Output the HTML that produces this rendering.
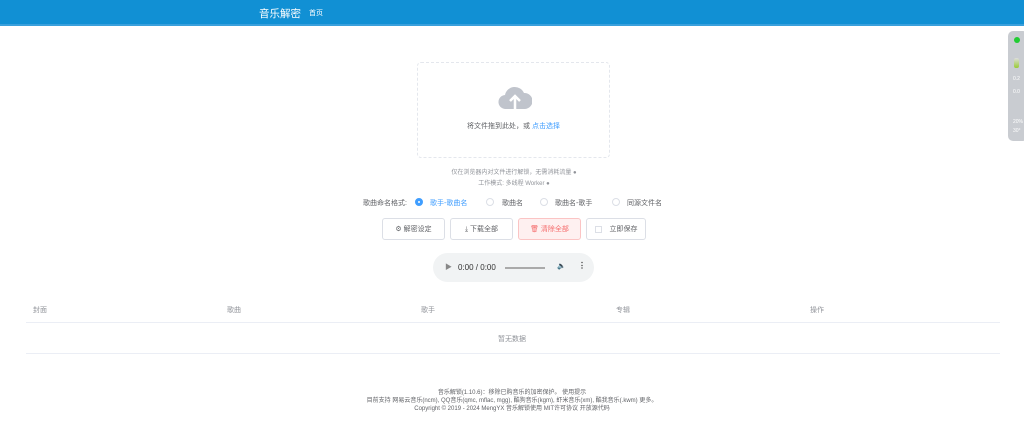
<!DOCTYPE html>
<html><head><meta charset="utf-8"><style>
*{margin:0;padding:0;box-sizing:border-box}
body{width:1024px;height:440px;background:#fff;font-family:"Liberation Sans","Noto Sans CJK SC",sans-serif;color:#606266;position:relative;overflow:hidden;font-size:7px}
.hdr{position:absolute;left:0;top:0;width:1024px;height:26px;background:#1190d4;border-bottom:2px solid #3aa0dc}
.hdr .t{position:absolute;left:259px;top:6px;color:#fff;font-size:10.5px}
.hdr .h{position:absolute;left:309px;top:8px;color:#fff;font-size:7px}
.up{position:absolute;left:417px;top:62px;width:193px;height:96px;border:1px dashed #e4e7ed;border-radius:4px}
.up .tx{position:absolute;top:58px;width:100%;text-align:center;font-size:7px;color:#606266}
.c{position:absolute;width:100%;text-align:center;color:#909399;font-size:6px}
.btn{position:absolute;top:218px;height:22px;border:1px solid #dcdfe6;border-radius:3px;font-size:7px;display:flex;align-items:center;justify-content:center;color:#606266}
.rad{position:absolute;top:198px;font-size:7px;color:#606266}
.dot{position:absolute;top:198px;width:8px;height:8px;border-radius:50%;border:1px solid #dcdfe6}
.th{position:absolute;top:305px;font-size:7px;color:#909399}
.line{position:absolute;left:26px;width:974px;height:1px;background:#ebeef5}
.f{position:absolute;width:100%;text-align:center;font-size:6px;color:#606266}
</style></head><body>
<div class="hdr"><span class="t">音乐解密</span><span class="h">首页</span></div>
<div class="up">
<svg style="position:absolute;left:80px;top:22px" width="34" height="26" viewBox="0 0 34 26"><path d="M8 24a7 7 0 0 1-1-14 10 10 0 0 1 19-2 8 8 0 0 1 1 16z" fill="#c0c4cc"/><path d="M17 24V12M12 16l5-5 5 5" stroke="#fff" stroke-width="2.5" fill="none"/></svg>
<div class="tx">将文件拖到此处，或 <span style="color:#409eff">点击选择</span></div></div>
<div class="c" style="top:167px;left:2px">仅在浏览器内对文件进行解锁，无需消耗流量 ●</div>
<div class="c" style="top:178px;left:2px">工作模式: 多线程 Worker ●</div>
<div class="rad" style="left:363px">歌曲命名格式:</div>
<div class="dot" style="left:415px;border:3px solid #409eff"></div><div class="rad" style="left:430px;color:#409eff">歌手-歌曲名</div>
<div class="dot" style="left:486px"></div><div class="rad" style="left:502px">歌曲名</div>
<div class="dot" style="left:540px"></div><div class="rad" style="left:555px">歌曲名-歌手</div>
<div class="dot" style="left:612px"></div><div class="rad" style="left:627px">同源文件名</div>
<div class="btn" style="left:382px;width:63px">⚙ 解密设定</div>
<div class="btn" style="left:450px;width:63px">⤓ 下载全部</div>
<div class="btn" style="left:518px;width:63px;background:#fef0f0;border-color:#fbc4c4;color:#f56c6c">🗑 清除全部</div>
<div class="btn" style="left:586px;width:60px"><span style="display:inline-block;width:7px;height:7px;border:1px solid #dcdfe6;margin-right:8px"></span>立即保存</div>
<div style="position:absolute;left:433px;top:253px;width:161px;height:29px;border-radius:15px;background:#f1f3f4;font-size:8px;color:#333">
<span style="position:absolute;left:12px;top:9px;font-size:7px;color:#888">▶</span><span style="position:absolute;left:25px;top:10px">0:00 / 0:00</span>
<span style="position:absolute;left:72px;top:14px;width:40px;height:2px;background:#aaa"></span>
<span style="position:absolute;left:124px;top:9px;font-size:7px">🔈</span><span style="position:absolute;left:145px;top:8px;font-weight:bold">⋮</span></div>
<div class="th" style="left:33px">封面</div><div class="th" style="left:227px">歌曲</div><div class="th" style="left:421px">歌手</div><div class="th" style="left:616px">专辑</div><div class="th" style="left:810px">操作</div>
<div class="line" style="top:322px"></div>
<div class="c" style="top:334px;font-size:7px">暂无数据</div>
<div class="line" style="top:353px"></div>
<div class="f" style="top:387px">音乐解锁(1.10.6)：移除已购音乐的加密保护。 使用提示</div>
<div class="f" style="top:395px">目前支持 网易云音乐(ncm), QQ音乐(qmc, mflac, mgg), 酷狗音乐(kgm), 虾米音乐(xm), 酷我音乐(.kwm) 更多。</div>
<div class="f" style="top:403px">Copyright © 2019 - 2024 MengYX 音乐解锁使用 MIT许可协议 开放源代码</div>
<div style="position:absolute;left:1008px;top:31px;width:20px;height:110px;background:#c9ccd1;border-radius:5px;font-size:5px;color:#fff">
<span style="position:absolute;left:6px;top:6px;width:6px;height:6px;border-radius:50%;background:#2c3"></span>
<span style="position:absolute;left:6px;top:27px;width:5px;height:10px;border-radius:2px;background:linear-gradient(#ddd,#9c3)"></span>
<span style="position:absolute;left:5px;top:45px">0.2</span><span style="position:absolute;left:5px;top:58px">0.0</span>
<span style="position:absolute;left:5px;top:88px">20%</span><span style="position:absolute;left:5px;top:97px">30°</span></div>
</body></html>
